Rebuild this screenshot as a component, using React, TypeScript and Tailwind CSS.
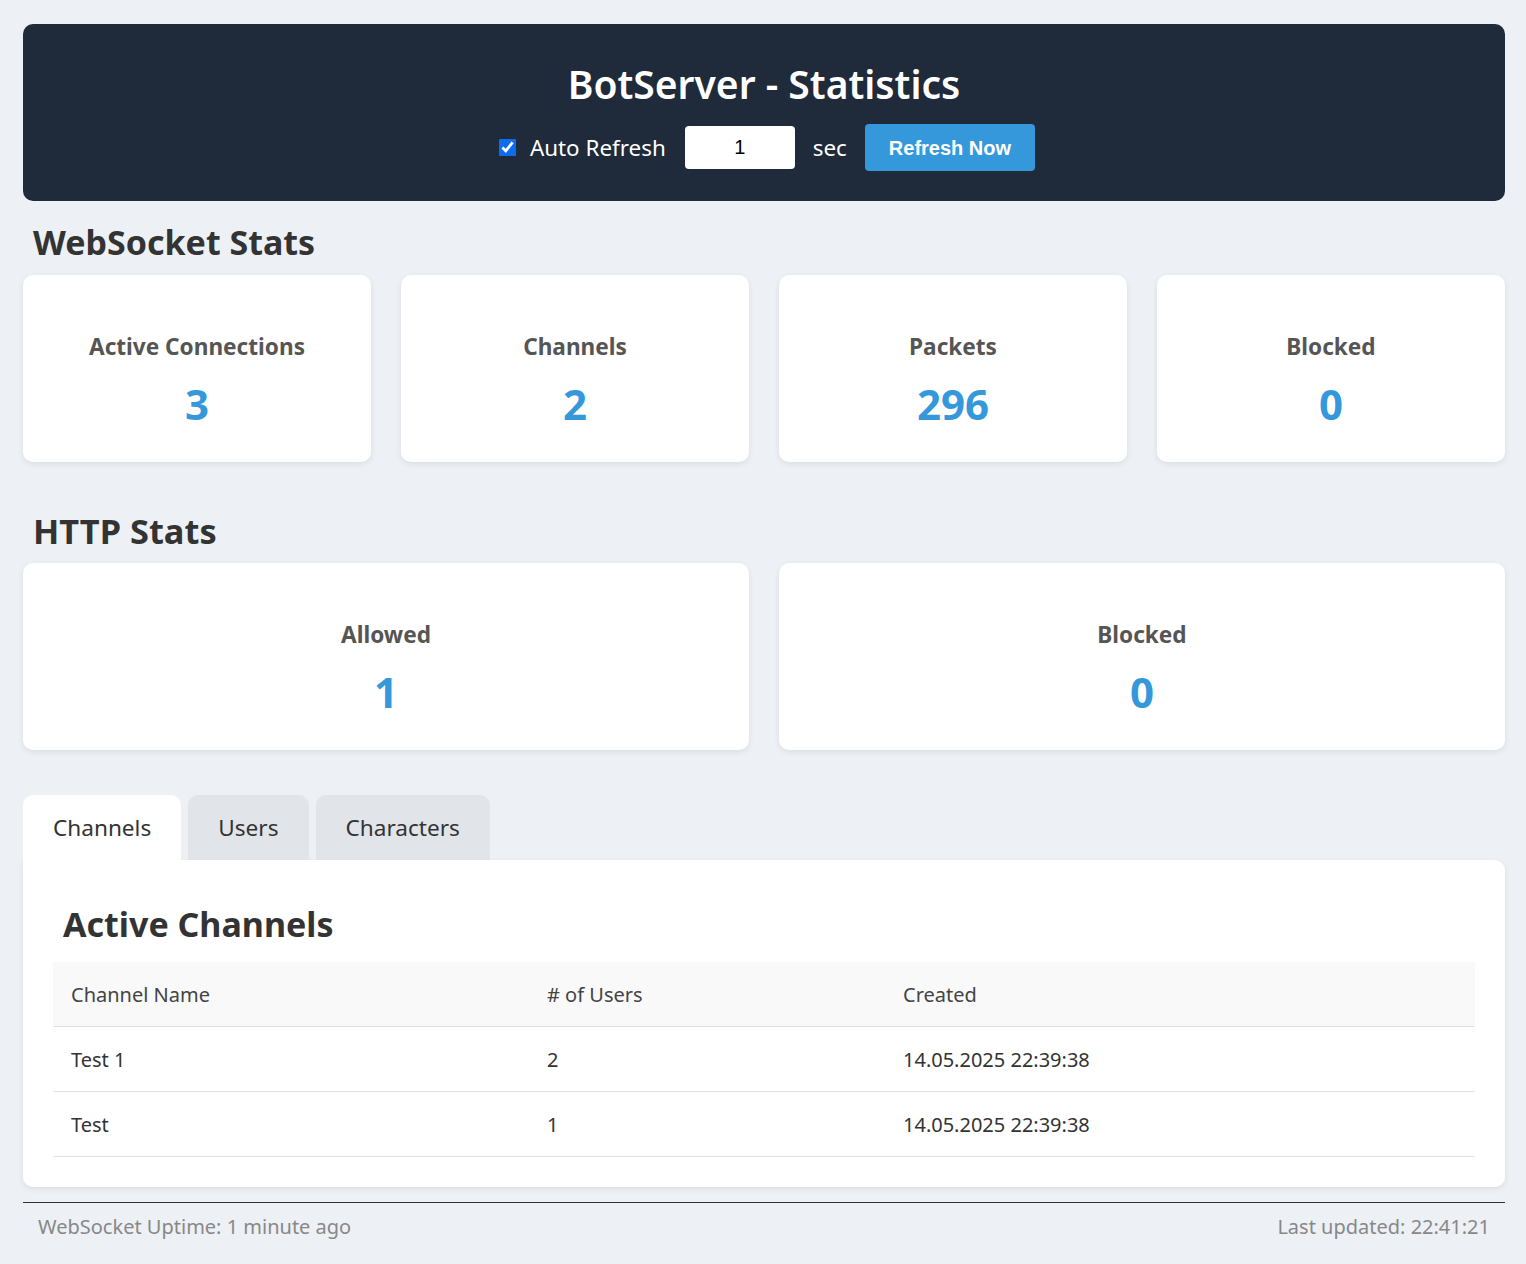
import { useState } from "react";

const wsStats = [
  { label: "Active Connections", value: "3" },
  { label: "Channels", value: "2" },
  { label: "Packets", value: "296" },
  { label: "Blocked", value: "0" },
];

const httpStats = [
  { label: "Allowed", value: "1" },
  { label: "Blocked", value: "0" },
];

const channels = [
  { name: "Test 1", users: 2, created: "14.05.2025 22:39:38" },
  { name: "Test", users: 1, created: "14.05.2025 22:39:38" },
];

function StatCard({ label, value }: { label: string; value: string }) {
  return (
    <div className="bg-white rounded-[10px] shadow-[0_2px_6px_rgba(0,0,0,0.08)] h-[187px] pt-[21px] flex flex-col items-center justify-center">
      <h3 className="text-[22.6px] font-bold text-[#555] leading-tight">{label}</h3>
      <div className="mt-[21px] text-[42px] font-bold text-[#3498db] leading-none">{value}</div>
    </div>
  );
}

export default function App() {
  const [tab, setTab] = useState("Channels");
  const [auto, setAuto] = useState(true);

  return (
    <main
      className="min-h-screen bg-[#edf0f5] pl-[23px] pr-[21px] pt-[24px] pb-6 text-[#333]"
      style={{ fontFamily: '"Noto Sans", "Open Sans", sans-serif' }}
    >
      {/* Header */}
      <header className="bg-[#1f2a3a] rounded-[10px] h-[177px] flex flex-col items-center justify-center text-white">
        <h1 className="text-[39px] font-semibold leading-none mt-[10px]">BotServer - Statistics</h1>
        <div className="mt-[21px] flex items-center text-[22.4px]">
          <input
            type="checkbox"
            checked={auto}
            onChange={(e) => setAuto(e.target.checked)}
            className="w-[17px] h-[17px] accent-[#0b6cf0] mr-[14px] ml-[6px]"
          />
          <span>Auto Refresh</span>
          <input
            defaultValue="1"
            className="ml-[19px] w-[110px] h-[43px] bg-white text-black rounded-[4px] text-center text-[20px] px-2"
            style={{ fontFamily: '"Liberation Sans", Arial, sans-serif' }}
          />
          <span className="ml-[18px]">sec</span>
          <button
            className="ml-[18px] bg-[#3498db] rounded-[4px] h-[47px] px-[24px] text-[20px] font-bold"
            style={{ fontFamily: '"Liberation Sans", Arial, sans-serif' }}
          >
            Refresh Now
          </button>
        </div>
      </header>

      {/* WebSocket Stats */}
      <h2 className="mt-[17px] ml-[10px] text-[34px] font-bold leading-[48px]">WebSocket Stats</h2>
      <div className="mt-[9px] grid grid-cols-4 gap-[30px]">
        {wsStats.map((s) => (
          <StatCard key={s.label} {...s} />
        ))}
      </div>

      {/* HTTP Stats */}
      <h2 className="mt-[45px] ml-[10px] text-[34.4px] font-bold leading-[48px]">HTTP Stats</h2>
      <div className="mt-[8px] grid grid-cols-2 gap-[30px]">
        {httpStats.map((s) => (
          <StatCard key={s.label} {...s} />
        ))}
      </div>

      {/* Tabs */}
      <div className="mt-[45px] flex gap-[7px]">
        {["Channels", "Users", "Characters"].map((t) => (
          <button
            key={t}
            onClick={() => setTab(t)}
            className={
              "h-[65px] px-[30px] rounded-t-[10px] text-[22.6px] text-[#333] " +
              (tab === t ? "bg-white" : "bg-[#e1e4e9]")
            }
          >
            {t}
          </button>
        ))}
      </div>
      <section className="bg-white rounded-b-[10px] rounded-tr-[10px] shadow-[0_2px_6px_rgba(0,0,0,0.08)] px-[30px] pt-[40px] pb-[30px]">
        <h2 className="ml-[10px] text-[34px] font-bold leading-[48px]">Active Channels</h2>
        <table className="mt-[14px] w-full text-[20px] text-left">
          <thead>
            <tr className="bg-[#f9f9f9] border-b border-[#e1e1e1]">
              <th className="w-[476px] h-[64px] px-[18px] pt-[2px] font-normal text-[#444]">Channel Name</th>
              <th className="w-[356px] px-[18px] pt-[2px] font-normal text-[#444]">
                # of Users
              </th>
              <th className="px-[18px] pt-[2px] font-normal text-[#444]">Created</th>
            </tr>
          </thead>
          <tbody>
            {channels.map((c) => (
              <tr key={c.name} className="border-b border-[#e1e1e1]">
                <td className="h-[65px] px-[18px] pt-[3px]">{c.name}</td>
                <td className="px-[18px] pt-[3px]">{c.users}</td>
                <td className="px-[18px] pt-[3px]">{c.created}</td>
              </tr>
            ))}
          </tbody>
        </table>
      </section>

      {/* Footer */}
      <footer className="mt-[15px] border-t border-[#333] flex justify-between px-[15px] pt-[9px] text-[20px] text-[#888]">
        <span>WebSocket Uptime: 1 minute ago</span>
        <span>Last updated: 22:41:21</span>
      </footer>
    </main>
  );
}
